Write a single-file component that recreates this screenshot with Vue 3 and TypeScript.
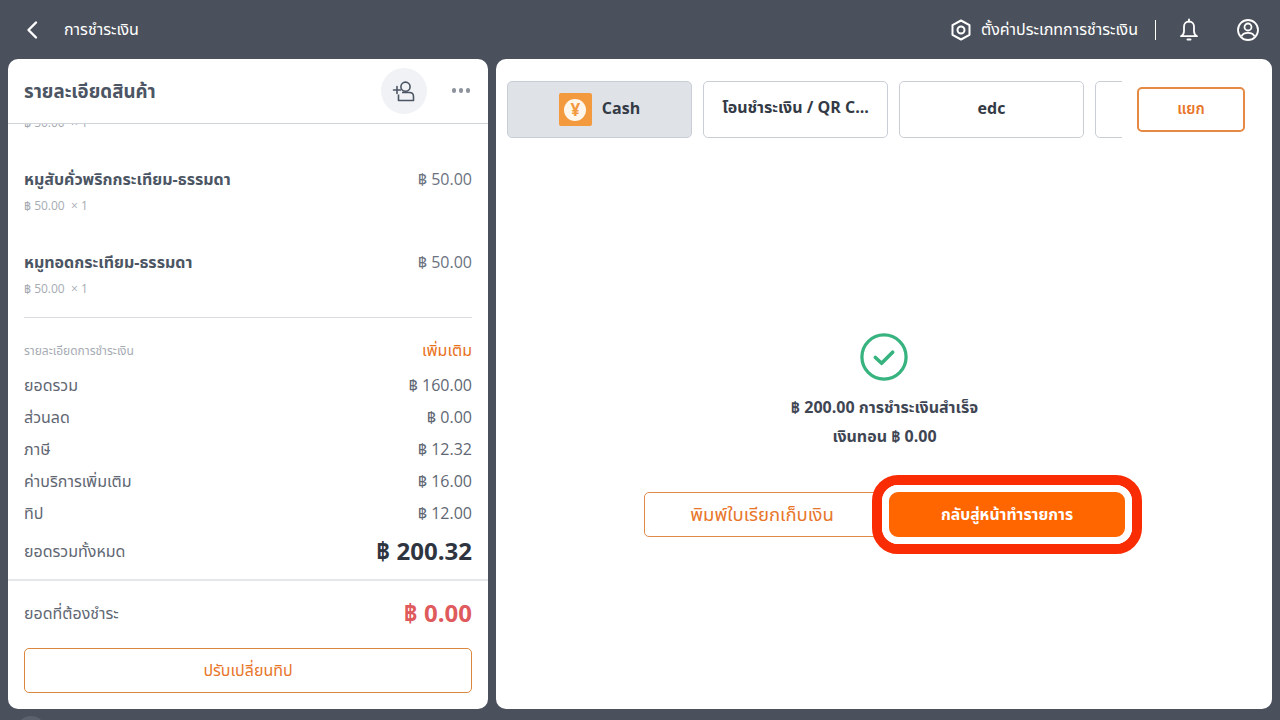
<script setup lang="ts">
const items = [
  { name: 'หมูสับคั่วพริกกระเทียม-ธรรมดา', price: 50 },
  { name: 'หมูสับคั่วพริกกระเทียม-ธรรมดา', price: 50 },
  { name: 'หมูทอดกระเทียม-ธรรมดา', price: 50 },
]

const rows = [
  { label: 'ยอดรวม', value: 160 },
  { label: 'ส่วนลด', value: 0 },
  { label: 'ภาษี', value: 12.32 },
  { label: 'ค่าบริการเพิ่มเติม', value: 16 },
  { label: 'ทิป', value: 12 },
]

const tabs = ['โอนชำระเงิน / QR C...', 'edc']

const baht = (value: number) => `฿ ${value.toFixed(2)}`
</script>

<template>
  <div class="page">
    <header class="topbar">
      <div class="topbar-left">
        <svg class="back" width="16" height="20" viewBox="0 0 16 20" fill="none">
          <path d="M12 2.5 4.5 10l7.5 7.5" stroke="#fff" stroke-width="2.4" stroke-linecap="round" stroke-linejoin="round" />
        </svg>
        <span class="topbar-title">การชำระเงิน</span>
      </div>
      <div class="topbar-right">
        <svg class="gear" width="22" height="24" viewBox="0 0 22 24" fill="none" stroke="#fff" stroke-width="2">
          <path d="M11 2.500 19.500 7.200v9.600L11 21.500 2.500 16.800V7.200z" stroke-linejoin="round" />
          <circle cx="11" cy="12" r="3.500" />
        </svg>
        <span class="topbar-setting">ตั้งค่าประเภทการชำระเงิน</span>
        <span class="topbar-sep"></span>
        <svg class="bell" width="22" height="24" viewBox="0 0 22 24" fill="none" stroke="#fff" stroke-width="1.800">
          <path d="M3 18.200c1.700-1 3-2.700 3-5V8.500a5 5 0 0 1 10 0v4.700c0 2.300 1.300 4 3 5z" stroke-linejoin="round" />
          <path d="M11 1.500v2" stroke-linecap="round" />
          <path d="M9.500 21.500h3" stroke-linecap="round" stroke-width="2" />
        </svg>
        <svg class="user" width="24" height="24" viewBox="0 0 24 24" fill="none" stroke="#fff" stroke-width="1.800">
          <circle cx="12" cy="12" r="10" />
          <circle cx="12" cy="9" r="3.500" />
          <path d="M5.500 18.500c.8-2.500 3.500-3.700 6.500-3.700s5.700 1.200 6.500 3.700" />
        </svg>
      </div>
    </header>

    <main class="content">
      <section class="panel-left">
        <div class="panel-head">
          <h2 class="panel-title">รายละเอียดสินค้า</h2>
          <div class="head-actions">
            <button class="add-user">
              <svg width="24" height="24" viewBox="0 0 24 24" fill="none" stroke="#4b5563" stroke-width="1.600">
                <circle cx="13.500" cy="7.700" r="4.600" />
                <path d="M6.500 15.500v6h15v-4c0-2.300-1.700-4-4-4H10" stroke-linejoin="round" />
                <path d="M1.500 11h7M5 7.500v7" stroke-linecap="round" />
              </svg>
            </button>
            <span class="more"><i></i><i></i><i></i></span>
          </div>
        </div>

        <div class="items">
          <div v-for="(item, index) in items" :key="index" class="item">
            <div class="item-main">
              <span class="item-name">{{ item.name }}</span>
              <span class="item-price">{{ baht(item.price) }}</span>
            </div>
            <div class="item-sub">{{ baht(item.price) }} &nbsp;× 1</div>
          </div>
        </div>

        <div class="summary">
          <div class="summary-head">
            <span class="summary-caption">รายละเอียดการชำระเงิน</span>
            <span class="summary-more">เพิ่มเติม</span>
          </div>
          <div v-for="row in rows" :key="row.label" class="summary-row">
            <span>{{ row.label }}</span>
            <span>{{ baht(row.value) }}</span>
          </div>
          <div class="summary-total">
            <span>ยอดรวมทั้งหมด</span>
            <strong>{{ baht(200.32) }}</strong>
          </div>
        </div>

        <div class="due">
          <div class="due-row">
            <span>ยอดที่ต้องชำระ</span>
            <strong>{{ baht(0) }}</strong>
          </div>
          <button class="btn-outline btn-tip">ปรับเปลี่ยนทิป</button>
        </div>
      </section>

      <section class="panel-right">
        <div class="tabs-row">
          <div class="tabs">
            <div class="tab tab-active">
              <span class="cash-icon"><span class="cash-coin">¥</span></span>
              <span>Cash</span>
            </div>
            <div v-for="tab in tabs" :key="tab" class="tab">{{ tab }}</div>
            <div class="tab"></div>
          </div>
          <button class="btn-outline btn-split">แยก</button>
        </div>

        <div class="result">
          <svg class="result-icon" width="48" height="48" viewBox="0 0 50 50" fill="none" stroke="#36b37e">
            <circle cx="25" cy="25" r="23" stroke-width="3.400" />
            <path d="M16 25.500 22.500 31.500 34 20" stroke-width="3.800" stroke-linecap="round" stroke-linejoin="round" />
          </svg>
          <p class="result-line result-first">฿ 200.00 การชำระเงินสำเร็จ</p>
          <p class="result-line">เงินทอน ฿ 0.00</p>
          <div class="result-actions">
            <button class="btn-outline btn-print">พิมพ์ใบเรียกเก็บเงิน</button>
            <button class="btn-primary">
              กลับสู่หน้าทำรายการ
              <span class="highlight"></span>
            </button>
          </div>
        </div>
      </section>
    </main>
    <span class="peek"></span>
  </div>
</template>

<style scoped>
.page {
  position: relative;
  width: 1280px;
  height: 720px;
  overflow: hidden;
  display: flex;
  flex-direction: column;
  background: #4b515c;
  font-family: "Open Sans", "Noto Sans", "Noto Sans Thai", "Liberation Sans", sans-serif;
  color: #4b5563;
}

.topbar {
  flex: 0 0 59px;
  display: flex;
  align-items: center;
  justify-content: space-between;
  padding: 0 20px 0 24px;
  color: #fff;
}

.topbar-left,
.topbar-right {
  display: flex;
  align-items: center;
}

.topbar-title {
  margin-left: 24px;
  font-size: 16px;
}

.gear {
  margin-right: -1px;
}

.topbar-setting {
  margin-left: 10px;
  font-size: 16px;
}

.topbar-sep {
  width: 1px;
  height: 20px;
  margin: 0 22px 0 17px;
  background: #fff;
}

.user {
  margin-left: 36px;
}

.content {
  flex: 1;
  min-height: 0;
  display: flex;
  gap: 8px;
  padding: 0 8px 11px;
}

.panel-left {
  flex: 0 0 480px;
  display: flex;
  flex-direction: column;
  overflow: hidden;
  background: #fff;
  border-radius: 10px;
}

.panel-head {
  flex: 0 0 65px;
  box-sizing: border-box;
  display: flex;
  align-items: center;
  justify-content: space-between;
  padding: 0 18px 0 16px;
  border-bottom: 1px solid #d1d5db;
}

.panel-title {
  margin: 2px 0 0;
  font-size: 18.7px;
  font-weight: 700;
  color: #4b5563;
}

.head-actions {
  display: flex;
  align-items: center;
  gap: 24.500px;
  margin-bottom: 1px;
}

.add-user {
  width: 46px;
  height: 46px;
  display: flex;
  align-items: center;
  justify-content: center;
  padding: 0;
  border: 0;
  border-radius: 50%;
  background: #f0f2f5;
}

.more {
  display: flex;
  gap: 2.500px;
}

.more i {
  width: 4.500px;
  height: 4.500px;
  border-radius: 50%;
  background: #8d939c;
}

.items {
  flex: 1;
  min-height: 0;
  overflow: hidden;
  display: flex;
  flex-direction: column;
  justify-content: flex-end;
  margin: 0 16px;
  padding-bottom: 16px;
  border-bottom: 1px solid #d9dce1;
}

.item {
  flex: none;
  height: 83px;
  box-sizing: border-box;
  padding-top: 5px;
}

.item:last-child {
  height: 55px;
}

.item-main {
  display: flex;
  justify-content: space-between;
  font-size: 16px;
  line-height: 22px;
}

.item-name {
  font-size: 16px;
  font-weight: 700;
}

.item-price {
  color: #6b7280;
}

.item-sub {
  margin-top: 8px;
  font-size: 12px;
  line-height: 16px;
  color: #a6abb3;
}

.summary {
  padding: 23px 16px 0;
  height: 263px;
  box-sizing: border-box;
  flex: none;
  border-bottom: 2px solid #e5e7eb;
}

.summary-head {
  display: flex;
  align-items: center;
  justify-content: space-between;
  height: 20px;
  margin-bottom: 9px;
}

.summary-caption {
  font-size: 12px;
  color: #a6abb3;
}

.summary-more {
  font-size: 16px;
  color: #e8711a;
}

.summary-row {
  display: flex;
  justify-content: space-between;
  align-items: center;
  height: 32px;
  font-size: 16px;
  color: #5f6773;
}

.summary-total {
  display: flex;
  justify-content: space-between;
  align-items: center;
  height: 44px;
  font-size: 16px;
  color: #5f6773;
}

.summary-total strong {
  font-size: 24px;
  color: #2f3540;
}

.due {
  flex: none;
  padding: 15px 16px 16px;
}

.due-row {
  display: flex;
  justify-content: space-between;
  align-items: center;
  height: 36px;
  margin-bottom: 16px;
  font-size: 16px;
  color: #5f6773;
}

.due-row strong {
  font-size: 24px;
  color: #df5a5c;
}

button {
  font-family: inherit;
}

.btn-outline {
  box-sizing: border-box;
  height: 45px;
  border: 1px solid #e08a4a;
  border-radius: 5px;
  background: #fff;
  color: #e8762a;
  font-size: 16px;
}

.btn-tip {
  display: block;
  width: 100%;
  border-color: #d9863f;
}

.panel-right {
  flex: 1;
  min-width: 0;
  display: flex;
  flex-direction: column;
  background: #fff;
  border-radius: 10px;
}

.tabs-row {
  display: flex;
  align-items: center;
  padding: 22px 27px 0 11px;
}

.tabs {
  flex: 0 0 615px;
  display: flex;
  gap: 11px;
  overflow: hidden;
}

.tab {
  flex: 0 0 185px;
  box-sizing: border-box;
  height: 57px;
  display: flex;
  align-items: center;
  justify-content: center;
  gap: 10px;
  padding-bottom: 4px;
  border: 1px solid #c9ced6;
  border-radius: 5px;
  font-size: 16px;
  font-weight: 700;
  color: #333a45;
}

.tab-active {
  background: #dfe3e8;
}

.cash-icon {
  width: 33px;
  height: 33px;
  margin-bottom: -4px;
  display: flex;
  align-items: center;
  justify-content: center;
  border-radius: 2px;
  background: #f39a3f;
}

.cash-coin {
  width: 22px;
  height: 22px;
  display: flex;
  align-items: center;
  justify-content: center;
  border-radius: 50%;
  background: #fff7ec;
  color: #f39a3f;
  font-size: 17px;
  font-weight: 700;
}

.btn-split {
  flex: 0 0 108px;
  margin-left: 15px;
  border-width: 2px;
  border-color: #e58a45;
  font-weight: 600;
  font-size: 15px;
}

.result {
  flex: 1;
  display: flex;
  flex-direction: column;
  align-items: center;
  padding-top: 195px;
  padding-left: 1px;
}

.result-icon {
  margin-right: 1px;
}

.result-line {
  margin: 0;
  height: 29px;
  line-height: 29px;
  font-size: 16px;
  font-weight: 700;
  color: #3f4653;
}

.result-first {
  margin-top: 12px;
}

.result-actions {
  display: flex;
  gap: 9px;
  margin-top: 41px;
}

.btn-print {
  width: 236px;
  font-size: 18.500px;
}

.btn-primary {
  position: relative;
  width: 236px;
  height: 45px;
  border: 0;
  border-radius: 4px;
  background: #ff6600;
  color: #fff;
  font-size: 15.750px;
  font-weight: 700;
}

.highlight {
  position: absolute;
  inset: -17px -17px -17px -17px;
  box-sizing: border-box;
  border: 10px solid #f92c04;
  border-radius: 26px;
}

.highlight::before {
  content: "";
  position: absolute;
  inset: 0;
  border: 7px solid #fff;
  border-radius: 16px;
}

.peek {
  position: absolute;
  left: 16px;
  top: 716px;
  width: 30px;
  height: 30px;
  border-radius: 50%;
  background: #5c626d;
}
</style>
